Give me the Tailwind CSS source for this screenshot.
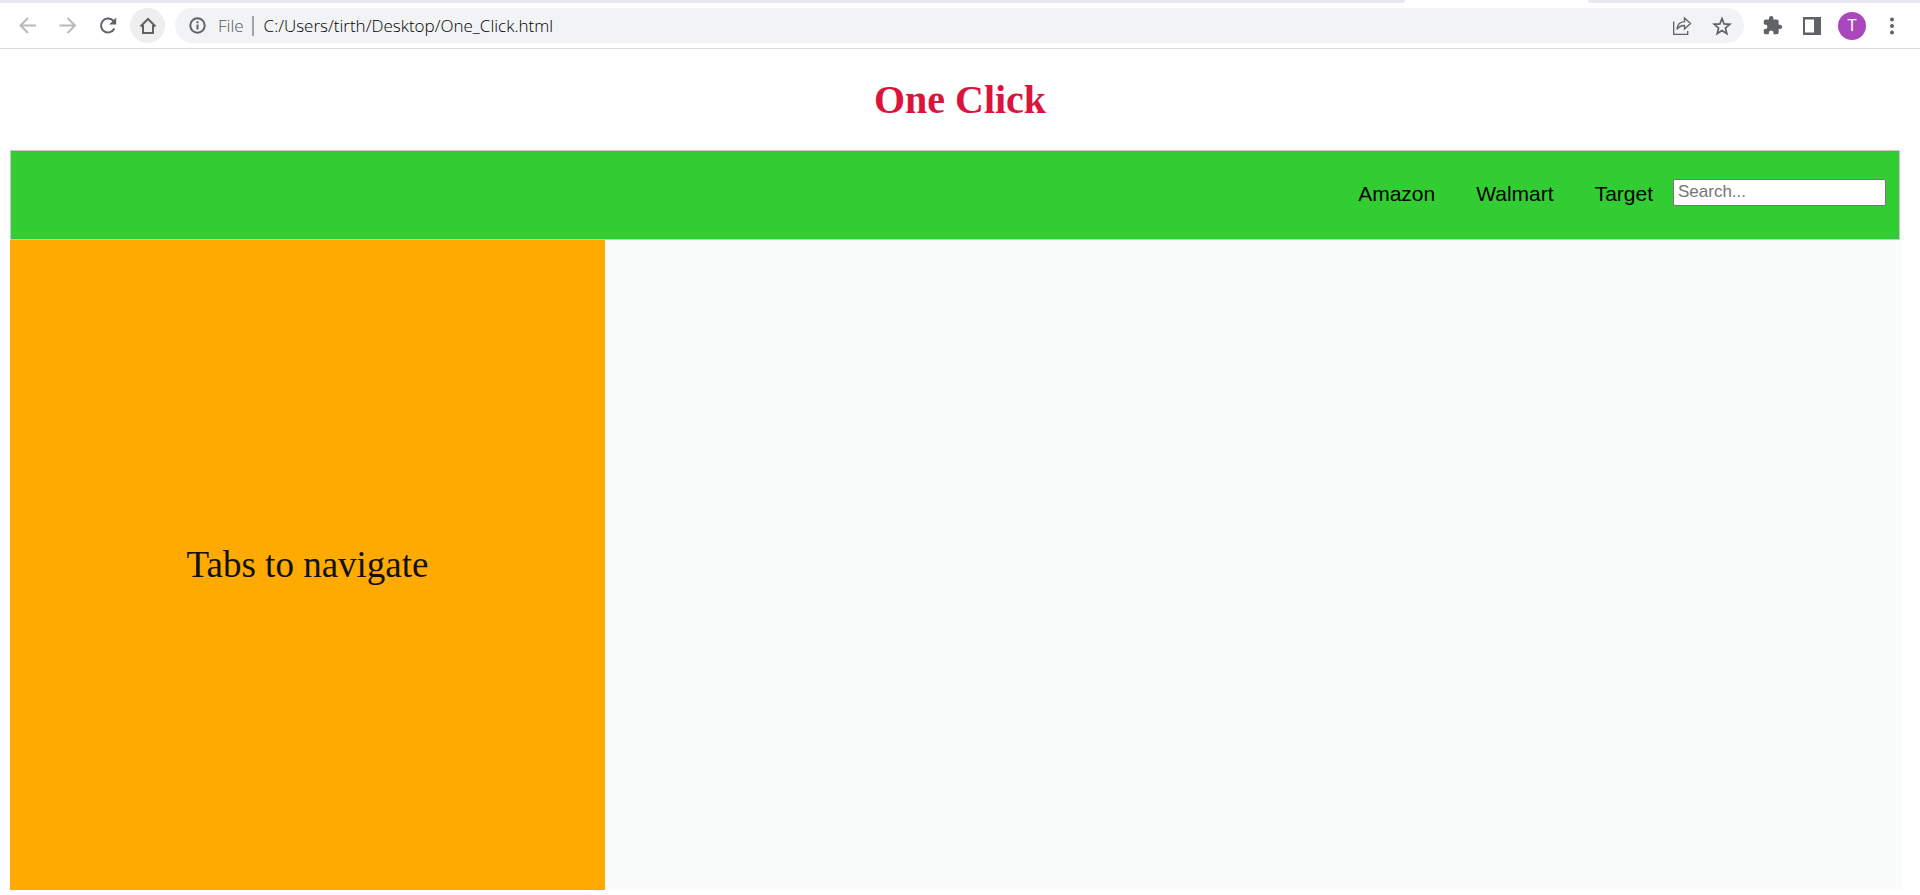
<!DOCTYPE html>
<html lang="en">
<head>
<meta charset="utf-8">
<title>One Click</title>
<script src="https://cdn.jsdelivr.net/npm/@tailwindcss/browser@4"></script>
</head>
<body class="flex min-h-screen flex-col bg-white text-black">
<header class="border-b border-[#dadce0] font-['Open_Sans',sans-serif]">
  <div class="flex h-[3px]">
    <div class="flex-1 rounded-br-lg bg-[#e8e9ee]"></div>
    <div class="w-[183px]"></div>
    <div class="w-[332px] rounded-bl-lg bg-[#e8e9ee]"></div>
  </div>
  <div class="flex items-center pt-[5px] pr-4 pb-[5px] pl-[10px]">
    <div class="flex gap-[5px]">
      <button aria-label="Back" class="flex size-[35px] items-center justify-center"><svg class="size-5" viewBox="0 0 20 20" fill="none" stroke="#bababd" stroke-width="2"><path d="M18 9.500H3M10 2 2.500 9.500 10 17"/></svg></button>
      <button aria-label="Forward" class="flex size-[35px] items-center justify-center"><svg class="size-5" viewBox="0 0 20 20" fill="none" stroke="#bababd" stroke-width="2"><path d="M1.500 9.500h15M9.500 2 17 9.500 9.500 17"/></svg></button>
      <button aria-label="Reload" class="flex size-[35px] items-center justify-center"><svg class="size-5" viewBox="0 0 20 20" fill="none" stroke="#5f6368" stroke-width="2"><path d="M16.300 12.500A7 7 0 1 1 15 4.500L17 6.500"/><path d="M18.200 1.500v7h-7z" fill="#5f6368" stroke="none"/></svg></button>
      <button aria-label="Home" class="flex size-[35px] items-center justify-center rounded-full bg-[#eeeeee]"><svg class="size-5" viewBox="0 0 20 20" fill="none" stroke="#5f6368" stroke-width="2"><path d="M2.500 10.500 10 3l7.500 7.500M5 9v8h10V9"/></svg></button>
    </div>
    <div class="ml-[10px] flex h-[35px] flex-1 items-center rounded-full bg-[#f1f3f4] pr-[10px] pl-[14px]">
      <svg class="size-[17px]" viewBox="0 0 17 17" fill="none" stroke="#5f6368" stroke-width="2"><circle cx="8.500" cy="8.500" r="7.200"/><path d="M8.500 7.500V12.500M8.500 4.300v2"/></svg>
      <span class="ml-3 text-[17px] font-light text-[#54585d]">File</span>
      <span class="ml-2 h-5 w-[2px] bg-[#a2a5a9]"></span>
      <input aria-label="Address" value="C:/Users/tirth/Desktop/One_Click.html" class="ml-[10px] min-w-0 flex-1 bg-transparent text-[17px] font-light text-black outline-none">
      <button aria-label="Share" class="flex size-6 items-center justify-center"><svg class="size-5" viewBox="0 0 20 20" fill="none" stroke="#5f6368" stroke-width="1.300"><path d="M1.700 5.500v12.800h14V15M5 13.500c.3-5 3-7.500 7.500-7.800V2l6 5.500-6 5.500V9.500C9 9.500 6.500 11 5 13.500z"/></svg></button>
      <button aria-label="Bookmark" class="ml-4 flex size-6 items-center justify-center"><svg class="size-5" viewBox="0 0 20 20" fill="none" stroke="#5f6368" stroke-width="1.700"><path d="m10 2.500 2.100 5.400 5.700.4-4.400 3.700 1.400 5.600-4.800-3.100-4.800 3.100L6.600 12 2.200 8.300l5.700-.4z"/></svg></button>
    </div>
    <div class="ml-4 flex items-center">
      <button aria-label="Extensions" class="flex size-6 items-center justify-center"><svg class="size-[21px]" viewBox="0 0 24 24" fill="#5f6368"><path d="M20.500 11H19V7a2 2 0 0 0-2-2h-4V3.500a2.500 2.500 0 0 0-5 0V5H4a2 2 0 0 0-2 2v3.800h1.500a2.700 2.700 0 0 1 0 5.400H2V20a2 2 0 0 0 2 2h3.800v-1.500a2.700 2.700 0 0 1 5.400 0V22H17a2 2 0 0 0 2-2v-4h1.500a2.500 2.500 0 0 0 0-5z"/></svg></button>
      <button aria-label="Side panel" class="ml-4 flex size-6 items-center justify-center"><svg class="size-[18px]" viewBox="0 0 18 18"><path fill="#5f6368" fill-rule="evenodd" d="M0 0h18v18H0zM2 2.500v13h9v-13z"/></svg></button>
      <button aria-label="Profile" class="ml-[14px] flex size-7 items-center justify-center rounded-full bg-[#ab47bc] font-[Roboto,sans-serif] text-base text-white">T</button>
      <button aria-label="Menu" class="ml-[14px] flex size-6 items-center justify-center"><svg class="size-[18px]" viewBox="0 0 18 18" fill="#5f6368"><circle cx="9" cy="2.500" r="2"/><circle cx="9" cy="9" r="2"/><circle cx="9" cy="15.500" r="2"/></svg></button>
    </div>
  </div>
</header>
<main class="flex flex-1 flex-col px-[10px] pb-[5px]">
  <h1 class="pt-7 pb-7 text-center font-['Liberation_Serif',serif] text-[40px] leading-[45px] font-bold text-[#dc143c]">One Click</h1>
  <nav class="mr-[10px] flex h-[90px] items-center justify-end border border-[#c8c8c8] bg-[#32cd32] pr-[13px] font-['Liberation_Sans',sans-serif] text-[21px] leading-6">
    <a href="#" class="pr-5 pb-[2px] pl-[21px]">Amazon</a>
    <a href="#" class="pr-5 pb-[2px] pl-[21px]">Walmart</a>
    <a href="#" class="pr-5 pb-[2px] pl-[21px]">Target</a>
    <input type="search" aria-label="Search" placeholder="Search..." class="mb-[6px] h-[27px] w-[213px] rounded-[2px] border border-[#767676] bg-white px-1 text-[17px] leading-5 placeholder:text-[#757575]">
  </nav>
  <div class="mr-[7px] flex flex-1 bg-[#fafcfb]">
    <aside class="flex w-[595px] items-center justify-center bg-[#ffaa00] pb-[2px] font-['Liberation_Serif',serif] text-[37px] leading-[43px] text-[#111111]">Tabs to navigate</aside>
    <section class="flex-1"></section>
  </div>
</main>
</body>
</html>
